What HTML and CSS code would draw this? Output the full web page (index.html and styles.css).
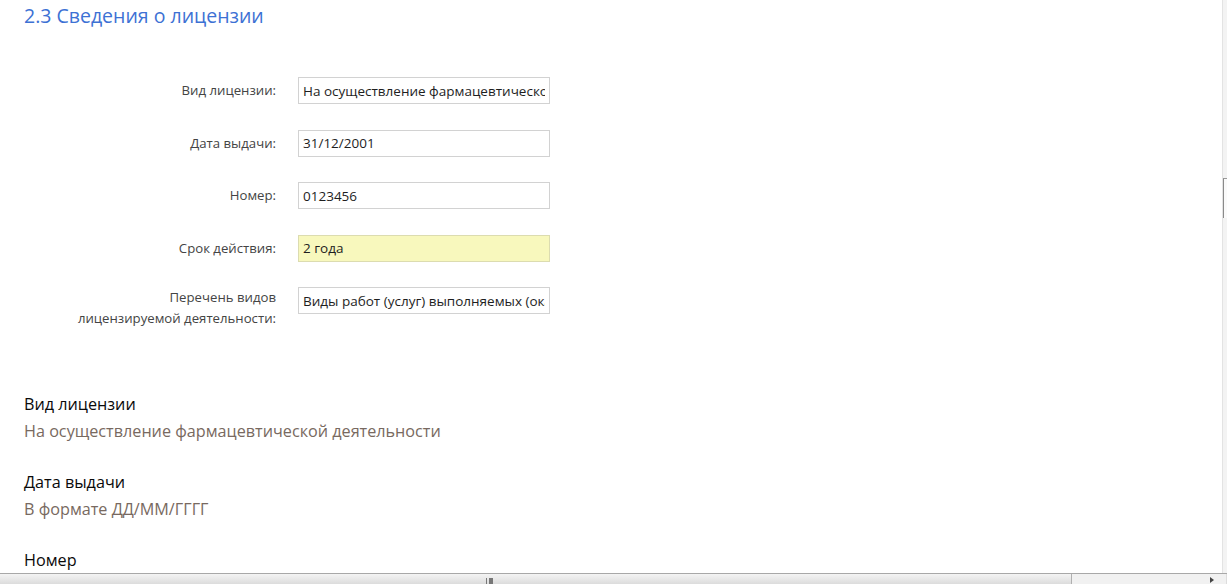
FILE: index.html
```html
<!DOCTYPE html>
<html lang="ru">

<head>
    <meta charset="UTF-8">
    <meta name="viewport" content="width=device-width, initial-scale=1.0">
    <title>Сведения о лицензии</title>
    <link rel="stylesheet" href="styles.css">
</head>

<body>
    <div class="page">
        <div class="viewport">
            <div class="content">
                <h2 class="sec-title">2.3 Сведения о лицензии</h2>

                <!-- форма -->
                <div class="lic-form">
                    <label class="lf-label">Вид лицензии:</label>
                    <input class="lf-input" type="text" readonly value="На осуществление фармацевтической деятельности">

                    <label class="lf-label">Дата выдачи:</label>
                    <input class="lf-input" type="text" readonly value="31/12/2001">

                    <label class="lf-label">Номер:</label>
                    <input class="lf-input" type="text" readonly value="0123456">

                    <label class="lf-label">Срок действия:</label>
                    <input class="lf-input lf-warn" type="text" readonly value="2 года">

                    <label class="lf-label lf-two">Перечень видов<br>лицензируемой деятельности:</label>
                    <input class="lf-input lf-top" type="text" readonly value="Виды работ (услуг) выполняемых (оказываемых) в составе деятельности">
                </div>

                <!-- описание полей -->
                <div class="field-help">
                    <div class="fh-name">Вид лицензии</div>
                    <div class="fh-desc">На осуществление фармацевтической деятельности</div>
                </div>
                <div class="field-help">
                    <div class="fh-name">Дата выдачи</div>
                    <div class="fh-desc">В формате ДД/ММ/ГГГГ</div>
                </div>
                <div class="field-help">
                    <div class="fh-name">Номер</div>
                </div>
            </div>
            <div class="v-scroll">
                <div class="v-thumb"></div>
            </div>
        </div>
        <div class="h-scroll">
            <div class="h-thumb"><span class="h-grip"></span></div>
            <div class="h-rest"><span class="h-arrow"></span></div>
        </div>
    </div>
</body>

</html>
```

FILE: styles.css
```css
html,
body {
    padding: 0;
    margin: 0;
    background-color: #fff;
}

.page {
    height: 584px;
    display: flex;
    flex-direction: column;
    overflow: hidden;
    font-family: "Open Sans", "Noto Sans", sans-serif;
}

.viewport {
    flex: 1;
    display: flex;
    min-height: 0;
    overflow: hidden;
}

.content {
    flex: 1;
    padding: 0 24px;
    overflow: hidden;
}

.sec-title {
    margin: 0;
    padding-top: 3px;
    font-size: 19.5px;
    font-weight: 400;
    line-height: 26px;
    color: #3d71d4;
}

/* форма лицензии */
.lic-form {
    display: grid;
    grid-template-columns: 252px 252px;
    column-gap: 22px;
    row-gap: 25.5px;
    align-items: center;
    margin-top: 48px;
}

.lf-label {
    text-align: right;
    font-size: 13.2px;
    line-height: 21px;
    color: #444;
}

.lf-two {
    align-self: start;
}

.lf-input {
    box-sizing: border-box;
    width: 252px;
    height: 27px;
    margin: 0;
    padding: 0 4px;
    border: 1px solid #d2d2d2;
    border-radius: 0;
    background-color: #fff;
    font-family: "Open Sans", "Noto Sans", sans-serif;
    font-size: 13.5px;
    color: #1e1e1e;
    outline: none;
}

.lf-warn {
    background-color: #f8f8bd;
    border-color: #dcdcb0;
}

.lf-top {
    align-self: start;
}

/* описание полей */
.field-help {
    margin-bottom: 24px;
}

.lic-form + .field-help {
    margin-top: 62px;
}

.fh-name {
    font-size: 16.2px;
    line-height: 27px;
    color: #0a0a0a;
}

.fh-desc {
    font-size: 16.2px;
    line-height: 27px;
    color: #786960;
}

/* полосы прокрутки */
.v-scroll {
    width: 4px;
    border-left: 1px solid #e3e3e3;
    background-color: #f3f3f3;
    padding-top: 178px;
}

.v-thumb {
    height: 39px;
    border-top: 1px solid #9a9a9a;
    border-left: 1px solid #8a8a8a;
    background-color: #fafafa;
}

.h-scroll {
    height: 10px;
    display: flex;
    border-top: 1px solid #a8a8a8;
    background-color: #ececec;
}

.h-thumb {
    width: 1072px;
    display: flex;
    justify-content: center;
    align-items: flex-end;
    padding-right: 92px;
    box-sizing: border-box;
    border-right: 1px solid #b0b0b0;
    background: linear-gradient(#f4f4f4, #dcdcdc);
}

.h-grip {
    width: 2px;
    height: 6px;
    border-left: 1px solid #777;
    border-right: 1px solid #777;
    box-shadow: 3px 0 0 0 #777;
    margin-right: 4px;
}

.h-rest {
    flex: 1;
    display: flex;
    justify-content: flex-end;
    align-items: flex-end;
    padding-right: 12px;
    border-right: 1px solid #ddd;
    background-color: #f1f1f1;
}

.h-arrow {
    width: 0;
    height: 0;
    border-top: 3px solid transparent;
    border-bottom: 3px solid transparent;
    border-left: 4px solid #444;
    margin-bottom: 1px;
}
```
